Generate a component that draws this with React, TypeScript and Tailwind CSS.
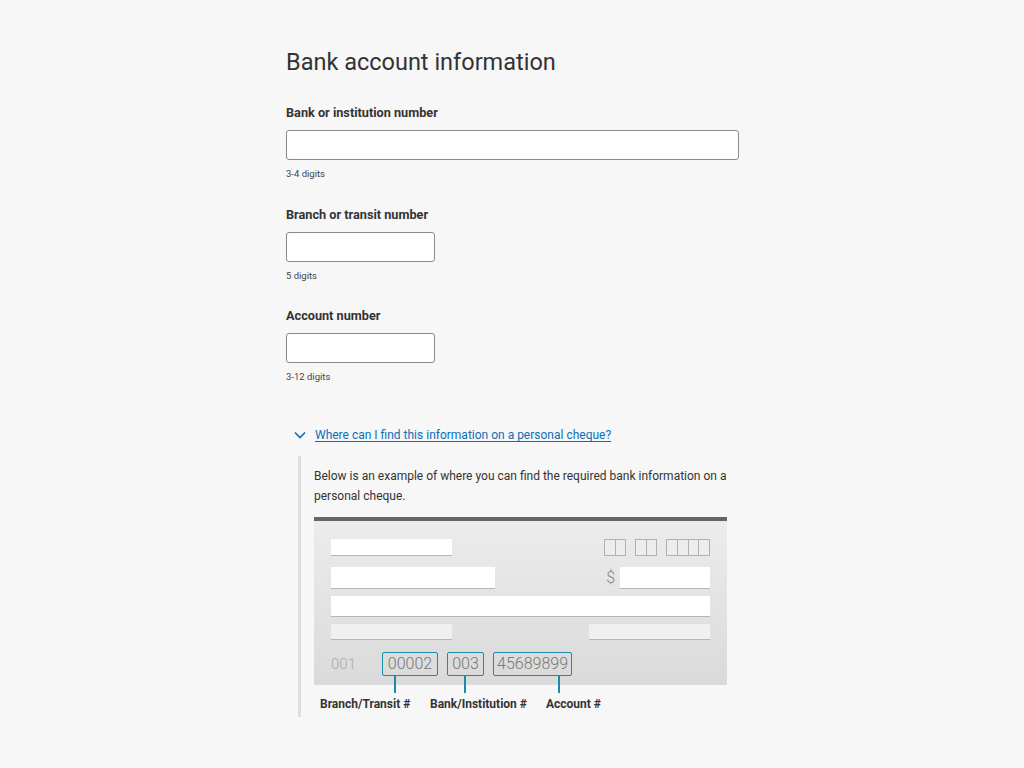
import React from "react";

function Field({ label, hint, wide }: { label: string; hint: string; wide?: boolean }) {
  return (
    <div className="flex flex-col">
      <label className="text-[12.7px] leading-[20px] font-bold text-[#333]">{label}</label>
      <input
        className={`mt-[7px] h-[30px] rounded-[3px] border border-[#8a8a8a] bg-white ${wide ? "w-[453px]" : "w-[149px]"}`}
      />
      <div className="mt-[7px] text-[9.5px] leading-[14px] text-[#444]">{hint}</div>
    </div>
  );
}

function Bar({ w, light, h }: { w: string; light?: boolean; h: string }) {
  return <div className={`${w} ${h} ${light ? "bg-[#f0f0f0]" : "bg-white"} border-b border-[#b5b5b5]`} />;
}

function DateBoxes({ n, w }: { n: number; w: string }) {
  return (
    <div className={`${w} h-[17px] flex border-[1.5px] border-[#b0b0b0] bg-[#ededed]`}>
      {Array.from({ length: n }).map((_, i) => (
        <div key={i} className={`flex-1 ${i > 0 ? "border-l-[1.5px] border-[#b0b0b0]" : ""}`} />
      ))}
    </div>
  );
}

function MicrBox({ text, lineLeft, w }: { text: string; lineLeft: number; w: string }) {
  return (
    <div className="relative">
      <div
        className={`${w} h-[24px] flex items-center justify-center rounded-[2px] border-[1.5px] border-[#1c8aa8] text-[16px] text-[#777] font-light leading-none`}
      >
        {text}
      </div>
      <div className="absolute top-[24px] w-[2px] h-[17px] bg-[#1c8aa8]" style={{ left: lineLeft }} />
    </div>
  );
}

export default function App() {
  return (
    <div className="min-h-[768px] bg-[#f7f7f7] text-[#333]" style={{ fontFamily: "Roboto, 'Liberation Sans', sans-serif" }}>
      <div className="mx-auto w-[452px] pt-[46px] pb-[51px]">
        <h1 className="text-[23.5px] leading-[32px] font-normal text-[#333]">Bank account information</h1>
        <div className="mt-[25px] flex flex-col gap-[23.5px]">
          <Field label="Bank or institution number" hint="3-4 digits" wide />
          <Field label="Branch or transit number" hint="5 digits" />
          <Field label="Account number" hint="3-12 digits" />
        </div>
        <div className="mt-[41px] flex items-center gap-[9px] pl-[8px]">
          <svg width="12" height="8" viewBox="0 0 12 8" className="text-[#0b6fb8]">
            <path d="M1 1.5 L6 6.5 L11 1.5" fill="none" stroke="currentColor" strokeWidth="1.6" />
          </svg>
          <a href="#" className="text-[12px] leading-[20px] text-[#0b6fb8] underline underline-offset-2">
            Where can I find this information on a personal cheque?
          </a>
        </div>
        <div className="mt-[11px] ml-[12px] border-l-[3px] border-[#dedede] pl-[13px] pt-[10px] pb-[4px]">
          <p className="text-[12px] leading-[20px] text-[#333]">
            Below is an example of where you can find the required bank information on a personal cheque.
          </p>
          <div className="mt-[11px] w-[413px] border-t-[4px] border-[#666] bg-gradient-to-b from-[#ececec] to-[#dadada] px-[17px] pt-[18px] pb-[9px]">
            <div className="flex items-start justify-between">
              <Bar w="w-[121px]" h="h-[17px]" />
              <div className="flex gap-[9px]">
                <DateBoxes n={2} w="w-[22px]" />
                <DateBoxes n={2} w="w-[22px]" />
                <DateBoxes n={4} w="w-[44px]" />
              </div>
            </div>
            <div className="mt-[11px] flex items-center justify-between">
              <Bar w="w-[164px]" h="h-[22px]" />
              <div className="flex items-center gap-[5px]">
                <span className="text-[16px] leading-none text-[#888] font-light">$</span>
                <Bar w="w-[90px]" h="h-[22px]" />
              </div>
            </div>
            <div className="mt-[7px]">
              <Bar w="w-full" h="h-[21px]" />
            </div>
            <div className="mt-[7px] flex justify-between">
              <Bar w="w-[121px]" h="h-[16px]" light />
              <Bar w="w-[121px]" h="h-[16px]" light />
            </div>
            <div className="mt-[12px] flex items-center h-[24px]">
              <span className="text-[15px] leading-none text-[#aaa] font-light w-[51px]">001</span>
              <div className="flex gap-[9px]">
                <MicrBox text="00002" lineLeft={12} w="w-[56px]" />
                <MicrBox text="003" lineLeft={17} w="w-[37px]" />
                <MicrBox text="45689899" lineLeft={65} w="w-[79px]" />
              </div>
            </div>
          </div>
          <div className="mt-[10px] flex pl-[6px] text-[12px] leading-[18px] font-bold text-[#333]">
            <span className="w-[110px]">Branch/Transit #</span>
            <span className="w-[116px]">Bank/Institution #</span>
            <span>Account #</span>
          </div>
        </div>
      </div>
    </div>
  );
}
